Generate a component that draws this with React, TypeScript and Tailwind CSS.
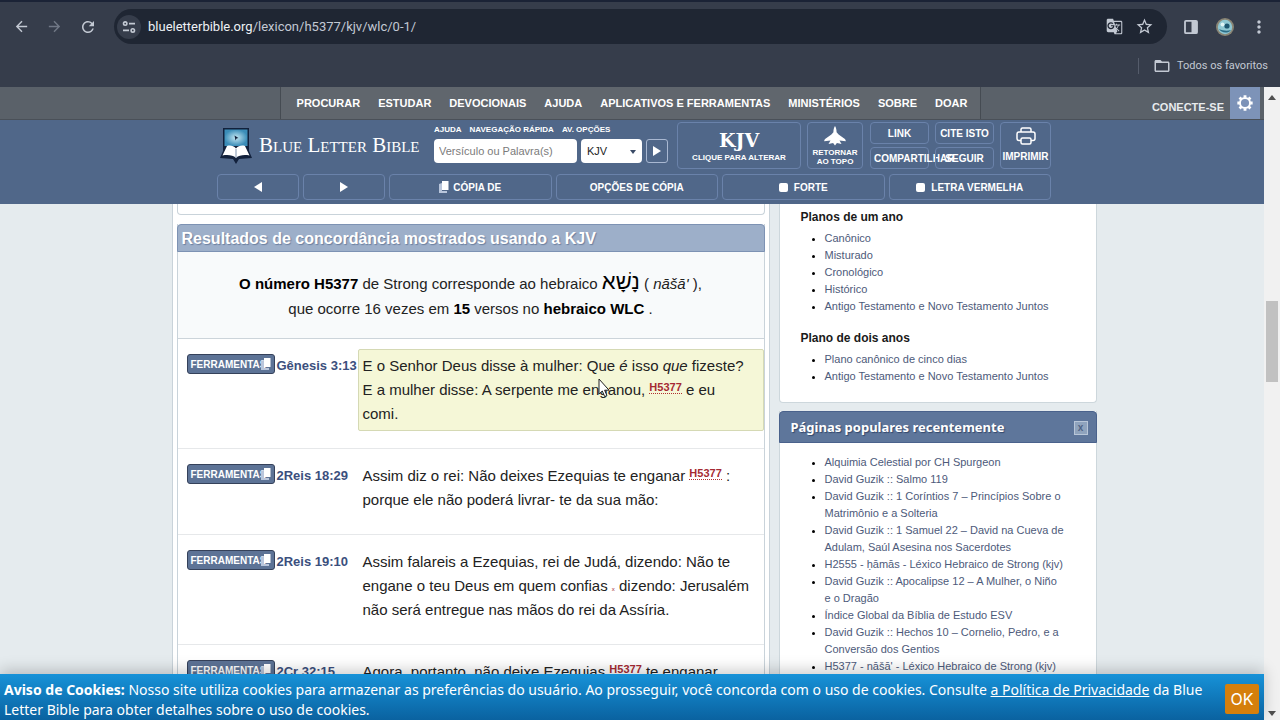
import React, { useState } from "react";
import {
  MdArrowBack,
  MdArrowForward,
  MdFolderOpen,
  MdGTranslate,
  MdMoreVert,
  MdRefresh,
  MdStarBorder,
} from "react-icons/md";

interface Verse {
  reference: string;
  highlighted?: boolean;
  text: React.ReactNode;
}

const menuItems = [
  "PROCURAR",
  "ESTUDAR",
  "DEVOCIONAIS",
  "AJUDA",
  "APLICATIVOS E FERRAMENTAS",
  "MINISTÉRIOS",
  "SOBRE",
  "DOAR",
];

const oneYearPlans = [
  "Canônico",
  "Misturado",
  "Cronológico",
  "Histórico",
  "Antigo Testamento e Novo Testamento Juntos",
];

const twoYearPlans = [
  "Plano canônico de cinco dias",
  "Antigo Testamento e Novo Testamento Juntos",
];

const popularPages = [
  "Alquimia Celestial por CH Spurgeon",
  "David Guzik :: Salmo 119",
  "David Guzik :: 1 Coríntios 7 – Princípios Sobre o Matrimônio e a Solteria",
  "David Guzik :: 1 Samuel 22 – David na Cueva de Adulam, Saúl Asesina nos Sacerdotes",
  "H2555 - ḥāmās - Léxico Hebraico de Strong (kjv)",
  "David Guzik :: Apocalipse 12 – A Mulher, o Niño e o Dragão",
  "Índice Global da Bíblia de Estudo ESV",
  "David Guzik :: Hechos 10 – Cornelio, Pedro, e a Conversão dos Gentios",
  "H5377 - nāšā' - Léxico Hebraico de Strong (kjv)",
];

const StrongLink: React.FC = () => (
  <a
    href="#h5377"
    className="relative -top-1 border-b border-dotted border-[#b03030] text-[11px] leading-none font-bold text-[#a52a33]"
  >
    H5377
  </a>
);

const verses: Verse[] = [
  {
    reference: "Gênesis 3:13",
    highlighted: true,
    text: (
      <>
        E o Senhor Deus disse à mulher: Que <i>é</i> isso <i>que</i> fizeste? E
        a mulher disse: A serpente me enganou, <StrongLink /> e eu comi.
      </>
    ),
  },
  {
    reference: "2Reis 18:29",
    text: (
      <>
        Assim diz o rei: Não deixes Ezequias te enganar <StrongLink /> : porque
        ele não poderá livrar- te da sua mão:
      </>
    ),
  },
  {
    reference: "2Reis 19:10",
    text: (
      <>
        Assim falareis a Ezequias, rei de Judá, dizendo: Não te engane o teu
        Deus em quem confias{" "}
        <small className="text-[6px] leading-none text-[#a52a33]">x</small>{" "}
        dizendo: Jerusalém não será entregue nas mãos do rei da Assíria.
      </>
    ),
  },
  {
    reference: "2Cr 32:15",
    text: (
      <>
        Agora, portanto, não deixe Ezequias <StrongLink /> te enganar
      </>
    ),
  },
];

// 사이트 설정 아이콘 (주소창 왼쪽)
const TuneIcon: React.FC = () => (
  <svg
    viewBox="0 0 14 14"
    className="size-[14px]"
    fill="none"
    stroke="currentColor"
    strokeWidth="1.6"
  >
    <circle cx="3.2" cy="3.6" r="1.7" />
    <path d="M7 3.6h6M1 10.4h6" />
    <circle cx="10.8" cy="10.4" r="1.7" />
  </svg>
);

const SidePanelIcon: React.FC = () => (
  <svg viewBox="0 0 16 16" className="size-4">
    <rect x="2" y="1.8" width="12" height="12.4" rx="1" fill="none" stroke="currentColor" strokeWidth="1.8" />
    <path d="M8.5 2H14v12H8.5z" fill="currentColor" />
  </svg>
);

const Avatar: React.FC = () => (
  <svg viewBox="0 0 20 20" className="size-5">
    <circle cx="10" cy="10" r="9" fill="#8a8574" />
    <circle cx="10" cy="10" r="7.2" fill="#8fc7d3" />
    <path d="M4 12c2 4 9 5 12 1-3 1-8 1-12-1z" fill="#2b6d86" />
    <circle cx="12" cy="9" r="2.6" fill="#1d5671" />
    <circle cx="7.5" cy="7.5" r="2" fill="#dff3f5" />
  </svg>
);

const GearIcon: React.FC = () => (
  <svg viewBox="0 0 20 20" className="size-[18px]" fill="none" stroke="#fff">
    <circle cx="10" cy="10" r="5.6" strokeWidth="2.2" />
    <path
      strokeWidth="3.2"
      d="M10 1.500v2.500M10 16v2.500M1.500 10h2.500M16 10h2.500M4 4l1.800 1.800M14.200 14.200l1.800 1.800M4 16l1.800-1.800M14.200 5.800L16 4"
    />
  </svg>
);

const LogoIcon: React.FC = () => (
  <svg viewBox="0 0 32 38" className="h-[38px] w-8">
    <defs>
      <radialGradient id="cover">
        <stop offset="0" stopColor="#c5e8f3" />
        <stop offset="1" stopColor="#3b8db8" />
      </radialGradient>
    </defs>
    <path d="M3 1h26v23l3 7-13 1-3 5-3-5-13-1 3-7z" fill="#12213c" />
    <path d="M4.500 2.500h23V19h-23z" fill="url(#cover)" />
    <path d="M14.500 8.500l4 2.500-2 .6-1 2z" fill="#12213c" />
    <path
      d="M16 21.500c-2.500-3-6-3.500-9-2.500L2.500 28.500c5-1 10.500-.5 13.500 2.500 3-3 8.500-3.500 13.500-2.500L25 19c-3-1-6.500-.5-9 2.500z"
      fill="#fff"
    />
    <path d="M16 22v9" stroke="#7f93ae" strokeWidth="1" />
  </svg>
);

const JetIcon: React.FC = () => (
  <svg viewBox="0 0 22 20" className="h-5 w-[22px]" fill="#fff">
    <path d="M11 0c1.100 1.700 1.500 3.600 1.600 6.200l2 2.300 5.600 3.900c1.100.8 1.600 1.700 1.600 2.800l-6.300-.7 2 3.600-4.600-1L11 19.500l-1.900-2.400-4.600 1 2-3.600-6.300.7c0-1.100.5-2 1.600-2.800l5.600-3.900 2-2.300C9.500 3.600 9.900 1.700 11 0z" />
  </svg>
);

const PrinterIcon: React.FC = () => (
  <svg
    viewBox="0 0 20 18"
    className="h-[18px] w-5"
    fill="none"
    stroke="#fff"
    strokeWidth="1.5"
    strokeLinejoin="round"
  >
    <path d="M5 5V2.500Q5 1 6.500 1h7Q15 1 15 2.500V5" />
    <path d="M5 13.500H3Q1 13.500 1 11.500V7Q1 5 3 5h14q2 0 2 2v4.500q0 2-2 2h-2" />
    <rect x="5" y="11" width="10" height="6" rx="1.5" />
  </svg>
);

const CopyIcon: React.FC = () => (
  <svg viewBox="0 0 10 12" className="h-3 w-[10px]">
    <path d="M0 3l3-1v8h5v2H0z" fill="#b9c6dc" />
    <path d="M3 0h6.500v9H3z" fill="#fff" />
  </svg>
);

const BrowserBar: React.FC = () => (
  <div className="border-t-2 border-[#1b2336] bg-[#363d4b] font-['Roboto',sans-serif] text-[#c3c9d3]">
    <div className="flex items-center gap-3 pt-[7px] pr-[11px] pl-3">
      <button aria-label="Voltar" className="p-px">
        <MdArrowBack size={17} />
      </button>
      <button aria-label="Avançar" className="ml-[2px] p-px text-[#717886]">
        <MdArrowForward size={17} />
      </button>
      <button aria-label="Recarregar" className="ml-[2px] p-px">
        <MdRefresh size={18} />
      </button>
      <div className="ml-1 flex h-[35px] flex-1 items-center rounded-full bg-[#1f2633] px-[3px]">
        <button
          aria-label="Informações do site"
          className="flex size-6 items-center justify-center rounded-full bg-[#363d4b]"
        >
          <TuneIcon />
        </button>
        <span className="ml-[7px] flex-1 text-[13px] text-[#c3c9d3]">
          <span className="text-[#eef1f5]">blueletterbible.org</span>
          /lexicon/h5377/kjv/wlc/0-1/
        </span>
        <button aria-label="Traduzir esta página" className="mr-3">
          <MdGTranslate size={17} />
        </button>
        <button aria-label="Favoritar" className="mr-[10px]">
          <MdStarBorder size={19} />
        </button>
      </div>
      <button aria-label="Painel lateral" className="ml-1">
        <SidePanelIcon />
      </button>
      <button aria-label="Perfil" className="ml-1">
        <Avatar />
      </button>
      <button aria-label="Mais" className="ml-[2px]">
        <MdMoreVert size={20} />
      </button>
    </div>
    <div className="flex h-[43px] items-center justify-end pr-3">
      <span className="h-4 border-l border-[#555c6b]" />
      <button className="ml-[14px] flex items-center gap-[6px] pt-px text-[11px]">
        <MdFolderOpen size={18} />
        Todos os favoritos
      </button>
    </div>
  </div>
);

const TopMenu: React.FC = () => (
  <div className="flex h-[33px] border-b border-[#4a5058] bg-[#5a6169] text-[11px] font-bold text-white">
    <div className="flex-1" />
    <nav className="flex w-[701px] items-center justify-center gap-[18px] border-x border-[#454b52] bg-[#60666d] pl-1">
      {menuItems.map((item) => (
        <a key={item} href="#menu" className="whitespace-nowrap">
          {item}
        </a>
      ))}
    </nav>
    <div className="flex flex-1 justify-end pr-1">
      <a href="#login" className="mt-3 mr-[6px] text-[#e8ebee]">
        CONECTE-SE
      </a>
      <button
        aria-label="Configurações"
        className="flex w-[30px] items-center justify-center bg-[#7d93b8]"
      >
        <GearIcon />
      </button>
    </div>
  </div>
);

const HeaderButton: React.FC<{
  className?: string;
  label?: string;
  children: React.ReactNode;
}> = ({ className = "", label, children }) => (
  <button
    aria-label={label}
    className={`flex items-center justify-center rounded-sm border border-[#6a82aa] whitespace-nowrap ${className}`}
  >
    {children}
  </button>
);

const SiteHeader: React.FC = () => {
  const [strong, setStrong] = useState(false);
  const [redLetter, setRedLetter] = useState(false);

  return (
    <header className="bg-[#506789] pt-[2px] pb-1 text-[10px] font-bold text-white">
      <div className="mx-auto flex w-[838px] flex-col gap-[5px] pl-1">
        <div className="flex h-[47px]">
          <a href="#home" className="flex w-[217px] items-center gap-[7px] pl-[3px]">
            <LogoIcon />
            <span className="font-['Liberation_Serif',serif] text-[21px] font-normal whitespace-nowrap [font-variant:small-caps]">
              Blue Letter Bible
            </span>
          </a>
          {/* 검색 영역 */}
          <div className="mr-[9px] flex flex-col">
            <div className="flex h-[15px] items-center gap-2 text-[8px]">
              <a href="#ajuda">AJUDA</a>
              <a href="#navegacao">NAVEGAÇÃO RÁPIDA</a>
              <a href="#opcoes">AV. OPÇÕES</a>
            </div>
            <div className="mt-[2px] flex h-6 gap-1 text-[11px] font-normal">
              <input
                aria-label="Versículo ou Palavra(s)"
                placeholder="Versículo ou Palavra(s)"
                className="w-[143px] rounded-sm bg-white px-[5px] text-[#333] placeholder:text-[#7b7b7b]"
              />
              <div className="relative flex">
                <select
                  aria-label="Versão"
                  className="w-[61px] appearance-none rounded-sm bg-white px-[6px] text-[#222]"
                >
                  <option>KJV</option>
                  <option>WLC</option>
                </select>
                <span className="pointer-events-none absolute top-[11px] right-[6px] border-x-[3px] border-t-4 border-x-transparent border-t-[#3a4a66]" />
              </div>
              <button
                aria-label="Buscar"
                className="flex w-[22px] items-center justify-center rounded-[3px] border border-[#a9b8d2]"
              >
                <span className="border-y-[5px] border-l-8 border-y-transparent border-l-white" />
              </button>
            </div>
          </div>
          <HeaderButton className="w-[124px] flex-col">
            <span className="font-['DejaVu_Serif',serif] text-[19px] leading-6">
              KJV
            </span>
            <span className="text-[8px] leading-3">CLIQUE PARA ALTERAR</span>
          </HeaderButton>
          <HeaderButton className="ml-[6px] w-14 flex-col text-[8px] leading-[9px]">
            <JetIcon />
            <span className="mt-[2px]">
              RETORNAR
              <br />
              AO TOPO
            </span>
          </HeaderButton>
          <div className="mr-[6px] ml-[7px] grid w-[124px] grid-cols-2 grid-rows-2 gap-x-[6px] gap-y-[3px]">
            <HeaderButton>LINK</HeaderButton>
            <HeaderButton>CITE ISTO</HeaderButton>
            <HeaderButton className="justify-start pl-[3px]">COMPARTILHAR</HeaderButton>
            <HeaderButton>SEGUIR</HeaderButton>
          </div>
          <HeaderButton className="w-[51px] flex-col gap-1">
            <PrinterIcon />
            IMPRIMIR
          </HeaderButton>
        </div>
        <div className="flex h-[26px] gap-1">
          <HeaderButton className="w-[82px]" label="Anterior">
            <span className="border-y-[5px] border-r-8 border-y-transparent border-r-white" />
          </HeaderButton>
          <HeaderButton className="w-[82px]" label="Próximo">
            <span className="border-y-[5px] border-l-8 border-y-transparent border-l-white" />
          </HeaderButton>
          <HeaderButton className="flex-1 gap-1">
            <CopyIcon />
            CÓPIA DE
          </HeaderButton>
          <HeaderButton className="flex-1">OPÇÕES DE CÓPIA</HeaderButton>
          <label className="flex flex-1 items-center justify-center gap-[6px] rounded-sm border border-[#6a82aa]">
            <input
              type="checkbox"
              checked={strong}
              onChange={(e) => setStrong(e.target.checked)}
              className="size-[9px] appearance-none rounded-xs bg-white checked:bg-[#2f6fd0]"
            />
            FORTE
          </label>
          <label className="flex flex-1 items-center justify-center gap-[6px] rounded-sm border border-[#6a82aa]">
            <input
              type="checkbox"
              checked={redLetter}
              onChange={(e) => setRedLetter(e.target.checked)}
              className="size-[9px] appearance-none rounded-xs bg-white checked:bg-[#2f6fd0]"
            />
            LETRA VERMELHA
          </label>
        </div>
      </div>
    </header>
  );
};

const VerseRow: React.FC<{ verse: Verse }> = ({ verse }) => (
  <div className="flex border-b border-[#e6e8ea] pt-[10px] pb-[17px]">
    <div className="flex w-[180px] shrink-0 items-start pl-[9px]">
      <button className="relative mt-[5px] h-5 w-[88px] shrink-0 rounded-[3px] border border-[#35415a] bg-[#5d7396] pl-[3px] text-left text-[10px] font-bold text-white">
        FERRAMENTAS
        <span className="absolute top-[3px] right-[3px]">
          <CopyIcon />
        </span>
      </button>
      <a
        href="#verse"
        className="mt-2 ml-[2px] text-[13px] leading-[18px] font-bold whitespace-nowrap text-[#3b4f7d]"
      >
        {verse.reference}
      </a>
    </div>
    <p
      className={`relative min-w-0 flex-1 border py-1 pr-[10px] pl-1 text-[15px] leading-6 text-[#222] ${
        verse.highlighted
          ? "rounded-xs border-[#d5d9b4] bg-[#f5f7d7]"
          : "border-transparent"
      }`}
    >
      {verse.text}
      {verse.highlighted && (
        <svg
          viewBox="0 0 12 20"
          className="absolute top-7 left-[239px] h-5 w-3"
          fill="#fff"
          stroke="#222"
        >
          <path d="M1 1v15l3.300-3 2.400 5.600 2.200-1-2.300-5.400h4.400z" />
        </svg>
      )}
    </p>
  </div>
);

const LinkList: React.FC<{ items: string[] }> = ({ items }) => (
  <ul className="list-disc pl-6 text-[11px] leading-[17px] marker:text-black">
    {items.map((item) => (
      <li key={item}>
        <a href="#link" className="text-[#4d5a7a]">
          {item}
        </a>
      </li>
    ))}
  </ul>
);

const Concordance: React.FC = () => (
  <main className="w-[598px] border-x border-[#c9d3da] bg-white px-1">
    <div className="h-[11px] rounded-b-sm border border-t-0 border-[#c9d3da]" />
    <section className="mt-[9px] border-x border-[#c9d3da]">
      <h2 className="-mx-px flex h-7 items-center rounded-t-sm border border-[#7d92b3] bg-[#9dafc9] pt-px pl-1 text-[16px] font-bold text-white [text-shadow:1px_1px_1px_#6b7f9f]">
        Resultados de concordância mostrados usando a KJV
      </h2>
      <div className="border-b border-[#ccd4da] bg-[#f8fafb] pt-[19px] pb-[17px] text-center text-[15px] leading-[25px] text-[#222]">
        <b className="text-black">O número H5377</b> de Strong corresponde ao
        hebraico{" "}
        <span lang="he" className="text-[22px] leading-none text-black">
          נָשָׁא
        </span>{" "}
        ( <i>nāšā'</i> ),
        <br />
        que ocorre 16 vezes em <b className="text-black">15</b> versos no{" "}
        <b className="text-black">hebraico WLC</b> .
      </div>
      {verses.map((verse) => (
        <VerseRow key={verse.reference} verse={verse} />
      ))}
    </section>
  </main>
);

const Sidebar: React.FC = () => {
  const [showPopular, setShowPopular] = useState(true);

  return (
    <aside className="flex w-[318px] flex-col gap-2">
      <section className="rounded-b-sm border border-t-0 border-[#cdd7dc] bg-white px-[21px] pb-[17px]">
        <h3 className="pt-[5px] pb-1 text-[12px] leading-[17px] font-bold text-[#1a1a1a]">
          Planos de um ano
        </h3>
        <LinkList items={oneYearPlans} />
        <h3 className="pt-[15px] pb-1 text-[12px] leading-[17px] font-bold text-[#1a1a1a]">
          Plano de dois anos
        </h3>
        <LinkList items={twoYearPlans} />
      </section>
      <section className="border-x border-[#cdd7dc] bg-white">
        <div className="-mx-px flex h-8 items-center justify-between rounded-t-sm border border-[#4a628c] bg-[#5e769b] pt-[2px] pr-2 pl-[11px]">
          <h3 className="font-['Noto_Sans',sans-serif] text-[13px] font-bold text-white [text-shadow:1px_1px_1px_#33486c]">
            Páginas populares recentemente
          </h3>
          <button
            aria-label="Fechar"
            onClick={() => setShowPopular(false)}
            className="flex size-[14px] items-center justify-center border border-[#b8c6d8] bg-[#8fa3bd] text-[10px] leading-none font-bold text-[#4f6486]"
          >
            x
          </button>
        </div>
        {showPopular && (
          <div className="pt-[11px] pr-[31px] pb-4 pl-[21px]">
            <LinkList items={popularPages} />
          </div>
        )}
      </section>
    </aside>
  );
};

const CookieBanner: React.FC<{ onClose: () => void }> = ({ onClose }) => (
  <div className="relative flex items-center justify-between bg-linear-to-b from-[#1792d8] to-[#0a62a0] pr-[5px] pl-1 shadow-[0_-4px_14px_rgba(0,0,0,0.2)]">
    <p className="pt-[6px] font-['Noto_Sans',sans-serif] text-[14px] leading-5 text-white">
      <b>Aviso de Cookies:</b> Nosso site utiliza cookies para armazenar as
      preferências do usuário. Ao prosseguir, você concorda com o uso de
      cookies. Consulte{" "}
      <a href="#privacidade" className="underline">
        a Política de Privacidade
      </a>{" "}
      da Blue Letter Bible para obter detalhes sobre o uso de cookies.
    </p>
    <button
      onClick={onClose}
      className="mt-1 h-[30px] w-[34px] shrink-0 rounded-xs bg-[#d57f0c] font-['Inter',sans-serif] text-[16px] text-white"
    >
      OK
    </button>
  </div>
);

// 브라우저 오른쪽 스크롤바
const ScrollTrack: React.FC = () => (
  <div className="flex w-4 flex-col items-center bg-[#f1f1f1] pt-2 pb-1">
    <span className="border-x-4 border-b-[5px] border-x-transparent border-b-[#505050]" />
    <span className="mt-[201px] h-[81px] w-3 bg-[#c1c1c1]" />
    <span className="mt-auto border-x-4 border-t-[5px] border-x-transparent border-t-[#505050]" />
  </div>
);

const App: React.FC = () => {
  const [cookiesOpen, setCookiesOpen] = useState(true);

  return (
    <div className="flex h-screen flex-col overflow-hidden font-['Liberation_Sans',Arial,sans-serif]">
      <BrowserBar />
      <div className="flex min-h-0 flex-1">
        <div className="flex min-w-0 flex-1 flex-col">
          <TopMenu />
          <SiteHeader />
          <div className="min-h-0 flex-1 overflow-hidden bg-[#e5ebee]">
            <div className="flex justify-center gap-[9px] pl-1">
              <Concordance />
              <Sidebar />
            </div>
          </div>
          {cookiesOpen && <CookieBanner onClose={() => setCookiesOpen(false)} />}
        </div>
        <ScrollTrack />
      </div>
    </div>
  );
};

export default App;
